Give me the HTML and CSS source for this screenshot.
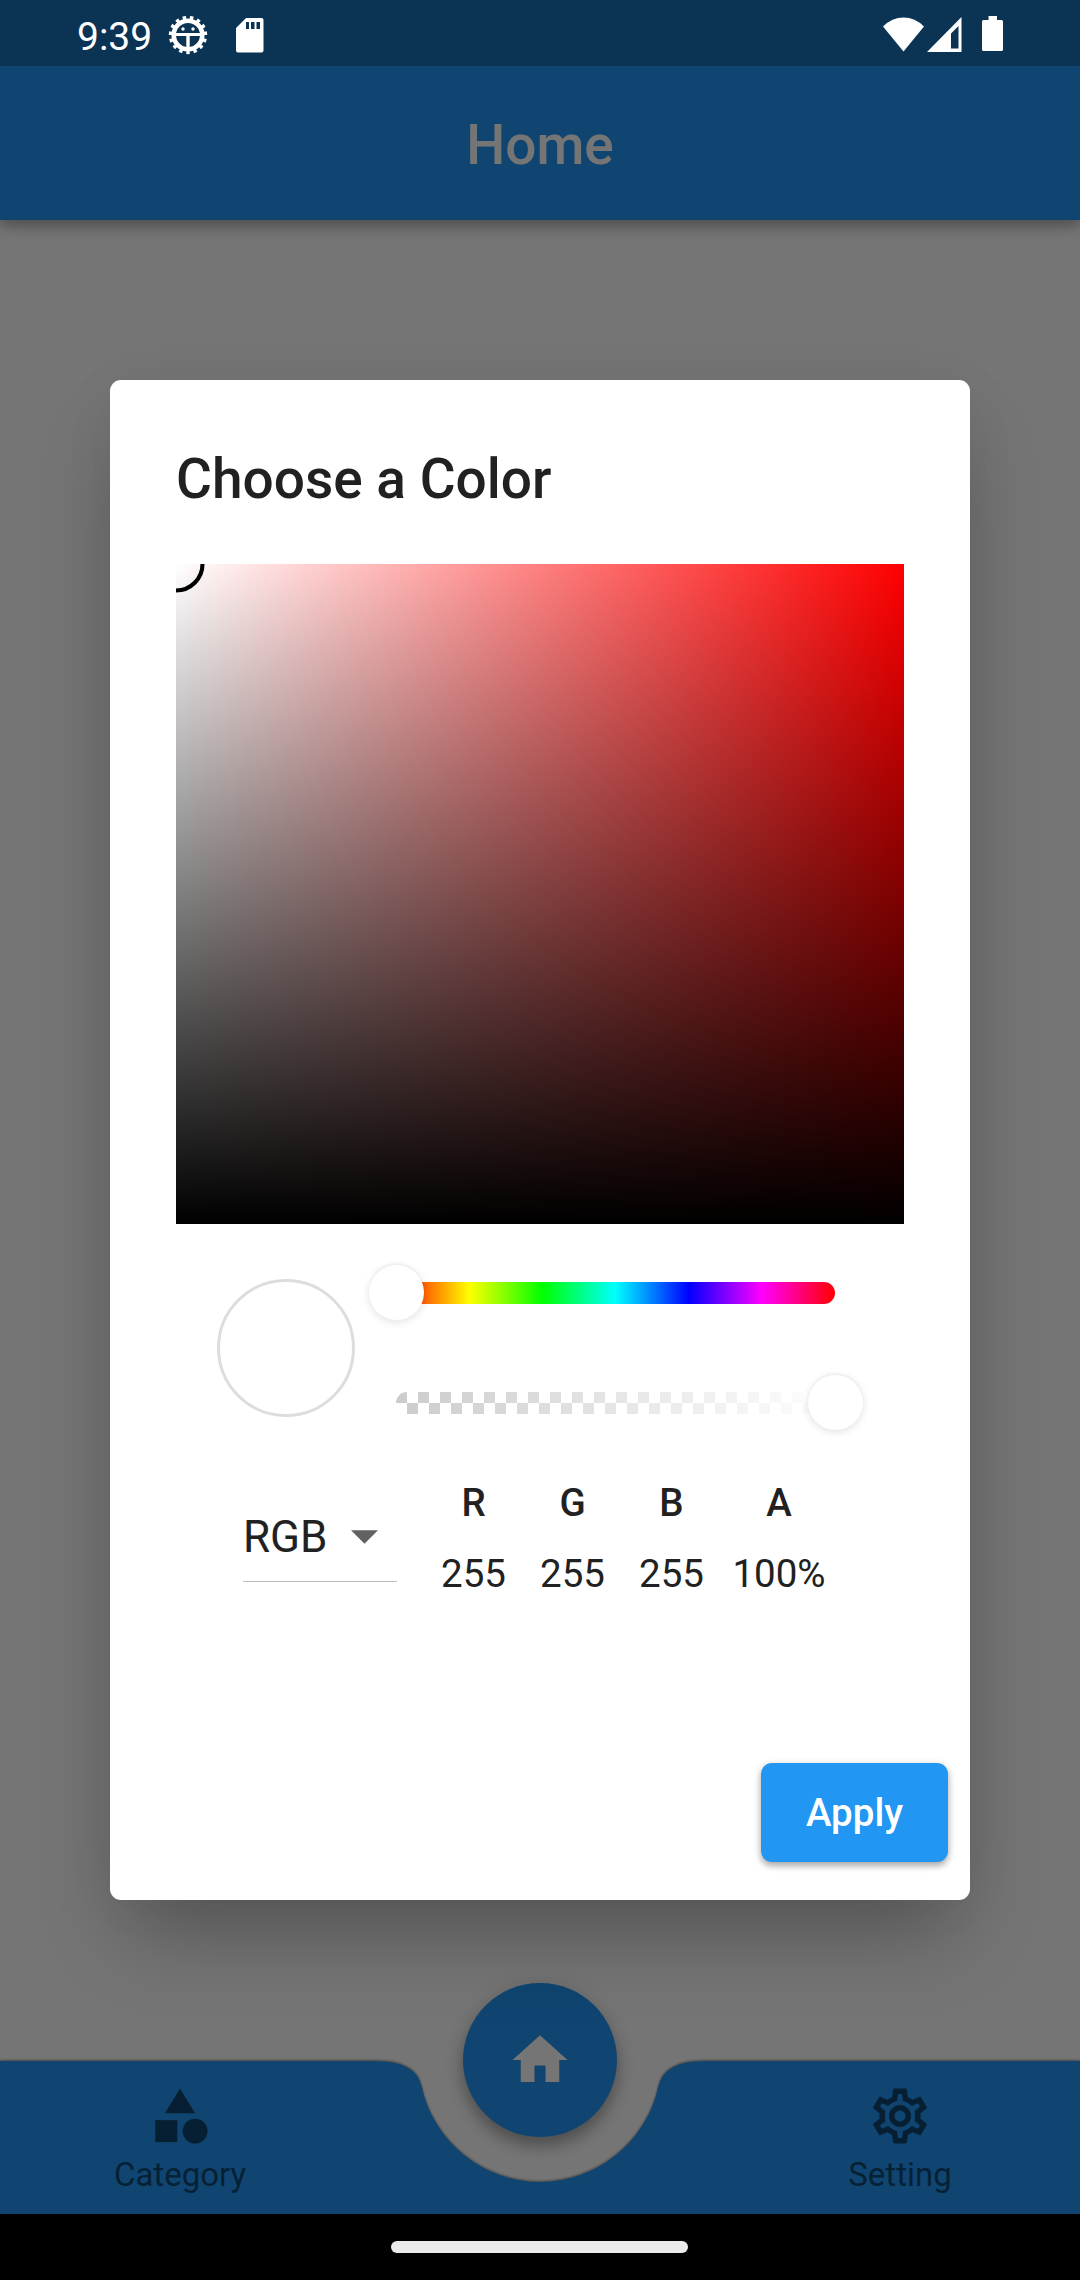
FILE: index.html
```html
<!DOCTYPE html>
<html lang="en">
<head>
<meta charset="utf-8">
<title>Choose a Color</title>
<link rel="stylesheet" href="styles.css">
</head>
<body>
<div class="phone">
  <div class="status-space"></div>
  <header class="app-bar"><h1 class="app-title">Home</h1></header>
  <main class="page"></main>
  <nav class="bottom-nav">
    <svg class="nav-shape" viewBox="0 0 1080 154" width="1080" height="154">
      <path d="M0 1H375Q416.25 1 421.7 26.4A121 121 0 0 0 658.3 26.4Q663.75 1 705 1H1080V154H0Z"/>
    </svg>
    <a class="nav-item">
      <svg class="nav-icon" viewBox="0 0 24 24"><path d="M12 2l-5.5 9h11z"/><circle cx="17.5" cy="17.5" r="4.5"/><path d="M3 13.5h8v8H3z"/></svg>
      <span class="nav-label">Category</span>
    </a>
    <a class="home-button">
      <svg class="home-icon" viewBox="0 0 24 24"><path d="M10 20v-6h4v6h5v-8h3L12 3 2 12h3v8z"/></svg>
    </a>
    <a class="nav-item">
      <svg class="nav-icon" viewBox="0 0 24 24"><path d="M19.43 12.98c.04-.32.07-.64.07-.98 0-.34-.03-.66-.07-.98l2.11-1.65c.19-.15.24-.42.12-.64l-2-3.46c-.09-.16-.26-.25-.44-.25-.06 0-.12.01-.17.03l-2.49 1c-.52-.4-1.08-.73-1.69-.98l-.38-2.65C14.46 2.18 14.25 2 14 2h-4c-.25 0-.46.18-.49.42l-.38 2.65c-.61.25-1.17.59-1.69.98l-2.49-1c-.06-.02-.12-.03-.18-.03-.17 0-.34.09-.43.25l-2 3.46c-.13.22-.07.49.12.64l2.11 1.65c-.04.32-.07.65-.07.98 0 .33.03.66.07.98l-2.11 1.65c-.19.15-.24.42-.12.64l2 3.46c.09.16.26.25.44.25.06 0 .12-.01.17-.03l2.49-1c.52.4 1.08.73 1.69.98l.38 2.65c.03.24.24.42.49.42h4c.25 0 .46-.18.49-.42l.38-2.65c.61-.25 1.17-.59 1.69-.98l2.49 1c.06.02.12.03.18.03.17 0 .34-.09.43-.25l2-3.46c.12-.22.07-.49-.12-.64l-2.11-1.65zm-1.98-1.71c.04.31.05.52.05.73 0 .21-.02.43-.05.73l-.14 1.13.89.7 1.08.84-.7 1.21-1.27-.51-1.04-.42-.9.68c-.43.32-.84.56-1.25.73l-1.06.43-.16 1.13-.2 1.35h-1.4l-.19-1.35-.16-1.13-1.06-.43c-.43-.18-.83-.41-1.23-.71l-.91-.7-1.06.43-1.27.51-.7-1.21 1.08-.84.89-.7-.14-1.13c-.03-.31-.05-.54-.05-.74s.02-.43.05-.73l.14-1.13-.89-.7-1.08-.84.7-1.21 1.27.51 1.04.42.9-.68c.43-.32.84-.56 1.25-.73l1.06-.43.16-1.13.2-1.35h1.39l.19 1.35.16 1.13 1.06.43c.43.18.83.41 1.23.71l.91.7 1.06-.43 1.27-.51.7 1.21-1.07.85-.89.7.14 1.13zM12 8c-2.21 0-4 1.79-4 4s1.79 4 4 4 4-1.79 4-4-1.79-4-4-4zm0 6c-1.1 0-2-.9-2-2s.9-2 2-2 2 .9 2 2-.9 2-2 2z"/></svg>
      <span class="nav-label">Setting</span>
    </a>
  </nav>
  <div class="gesture-space"></div>

  <div class="scrim">
    <section class="dialog">
      <h2 class="dialog-title">Choose a Color</h2>
      <div class="color-area">
        <svg class="pointer" width="60" height="60"><circle cx="0" cy="0" r="26.5"/></svg>
      </div>
      <div class="slider-row">
        <div class="swatch"></div>
        <div class="sliders">
          <div class="slider hue"><span class="thumb"></span></div>
          <div class="slider alpha"><span class="thumb"></span></div>
        </div>
      </div>
      <div class="values-row">
        <div class="mode-select">
          <span>RGB</span>
          <svg class="arrow" viewBox="0 0 10 5"><path d="M0 0h10L5 5z"/></svg>
        </div>
        <div class="channels">
          <div class="channel"><b>R</b><span>255</span></div>
          <div class="channel"><b>G</b><span>255</span></div>
          <div class="channel"><b>B</b><span>255</span></div>
          <div class="channel wide"><b>A</b><span>100%</span></div>
        </div>
      </div>
      <div class="actions"><button class="apply">Apply</button></div>
    </section>
  </div>

  <div class="status-bar">
    <span class="clock">9:39</span>
    <svg class="bug" viewBox="-20 -20 40 40" width="40" height="40">
      <circle r="14.3" class="ring"/>
      <circle r="17.2" class="teeth" pathLength="60" transform="rotate(90)"/>
      <path d="M-14-2H14V1H-14zM-1.700 0H1.700V14H-1.700z"/>
      <circle cx="-5" cy="-6" r="1.700"/><circle cx="5" cy="-6" r="1.700"/>
    </svg>
    <svg class="sd" viewBox="0 0 28 35" width="28" height="35"><path fill-rule="evenodd" d="M10 0H25.500Q27.500 0 27.500 2V32.500Q27.500 34.500 25.500 34.500H2Q0 34.500 0 32.500V10zM10 4V11H13V4zM15 4V11H18.500V4zM20.500 4V11H24V4z"/></svg>
    <div class="system-icons">
      <svg class="wifi" viewBox="0 0 41 35" width="41" height="35"><path d="M0 9.500Q9 0.500 20.500 0.500T41 9.500L20.500 34.500z"/></svg>
      <svg class="signal" viewBox="0 0 35 35" width="35" height="35"><path fill-rule="evenodd" d="M34.500 0V35H0zM31.500 9L24 16.500V31.500H31.500z"/></svg>
      <svg class="battery" viewBox="0 0 21 35" width="21" height="35"><path d="M6.500 0H15V4H19.500Q21 4 21 5.500V33.500Q21 35 19.500 35H1.500Q0 35 0 33.500V5.500Q0 4 1.500 4H6.500z"/></svg>
    </div>
  </div>
  <div class="gesture-bar"><span class="handle"></span></div>
</div>
</body>
</html>
```
FILE: styles.css
```css
* { box-sizing: border-box; }
body { margin: 0; font-family: Roboto, sans-serif; }
.phone {
  position: relative;
  width: 1080px;
  height: 2280px;
  display: flex;
  flex-direction: column;
  overflow: hidden;
  background: #fff;
}
.status-space { height: 66px; background: #2196f3; z-index: 1; }
.app-bar {
  height: 154px;
  display: flex;
  align-items: center;
  justify-content: center;
  padding-top: 3px;
  background: #2196f3;
  box-shadow: 0 6px 12px rgba(0,0,0,.26), 0 3px 22px rgba(0,0,0,.12);
}
.app-title { margin: 0; font-size: 55px; font-weight: 500; color: #fff; }
.page { flex: 1; }
.bottom-nav { position: relative; height: 154px; display: flex; justify-content: space-between; }
.nav-shape { position: absolute; inset: 0; overflow: visible; filter: drop-shadow(0 -1px 1px rgba(0,0,0,.4)); fill: #2196f3; }
.nav-item {
  position: relative;
  width: 360px;
  display: flex;
  flex-direction: column;
  align-items: center;
  padding-top: 23px;
  color: rgba(0,0,0,.54);
}
.nav-icon { width: 66px; height: 66px; fill: currentColor; }
.nav-label { margin-top: 7px; font-size: 33px; line-height: 38px; }
.home-button {
  position: relative;
  width: 154px;
  height: 154px;
  margin-top: -77px;
  display: flex;
  align-items: center;
  justify-content: center;
  border-radius: 50%;
  background: #2196f3;
  box-shadow: 0 9px 14px rgba(0,0,0,.25), 0 5px 26px rgba(0,0,0,.14);
}
.home-icon { width: 66px; height: 66px; fill: #fff; }
.gesture-space { height: 66px; background: #fff; }

.scrim {
  position: absolute;
  inset: 0;
  z-index: 2;
  display: flex;
  align-items: center;
  justify-content: center;
  background: rgba(0,0,0,.54);
}
.dialog {
  width: 860px;
  height: 1520px;
  display: flex;
  flex-direction: column;
  padding: 67px 22px 38px 66px;
  border-radius: 11px;
  background: #fff;
  color: #212121;
  box-shadow: 0 46px 80px -16px rgba(0,0,0,.29), 0 2px 60px rgba(0,0,0,.04);
}
.dialog-title { margin: 0; font-size: 55px; line-height: 64px; font-weight: 500; }
.color-area {
  width: 728px;
  height: 660px;
  margin-top: 53px;
  background: linear-gradient(to bottom, transparent, #000), linear-gradient(to right, #fff, #f00);
}
.pointer { display: block; fill: none; stroke: #000; stroke-width: 4.1; }
.slider-row { display: flex; padding-left: 41px; margin-top: 55px; }
.swatch { width: 138px; height: 138px; border: 3px solid #ddd; border-radius: 50%; }
.sliders { display: flex; flex-direction: column; gap: 88px; padding: 2.500px 0 0 41px; }
.slider { display: flex; align-items: center; width: 439px; height: 22px; border-radius: 11px; }
.hue { background: linear-gradient(to right, #f00, #ff0, #0f0, #0ff, #00f, #f0f, #f00); }
.alpha {
  justify-content: flex-end;
  background:
    linear-gradient(to right, rgba(255,255,255,0), #fff),
    conic-gradient(#fff 25%, #ccc 0 50%, #fff 0 75%, #ccc 0) 0 0 / 22px 22px;
}
.thumb {
  flex: none;
  width: 55px;
  height: 55px;
  margin: 0 -27.5px;
  border-radius: 50%;
  background: #fff;
  box-shadow: 0 2px 8px rgba(0,0,0,.12), 0 -2px 2px rgba(0,0,0,.04);
}
.values-row { display: flex; margin-top: 58px; padding-left: 67px; }
.mode-select {
  width: 154px;
  height: 106.500px;
  display: flex;
  align-items: center;
  gap: 23px;
  border-bottom: 1px solid #bdbdbd;
  font-size: 44px;
  padding-top: 19px;
}
.arrow { width: 27px; height: 14px; fill: #616161; }
.channels { display: flex; padding: 4.500px 0 0 27px; font-size: 38.5px; line-height: 45px; }
.channel { width: 99px; display: flex; flex-direction: column; align-items: center; gap: 26px; }
.channel.wide { width: 116px; }
.channel b { font-weight: 500; }
.actions { display: flex; justify-content: flex-end; margin-top: auto; }
.apply {
  width: 187px;
  height: 99px;
  border: 0;
  border-radius: 11px;
  background: #2196f3;
  color: #fff;
  font: 500 38.5px Roboto, sans-serif;
  box-shadow: 0 4px 6px rgba(0,0,0,.25), 0 2px 10px rgba(0,0,0,.14);
}

.status-bar {
  position: absolute;
  inset: 0 0 auto;
  z-index: 3;
  height: 66px;
  display: flex;
  align-items: flex-start;
  padding: 0 77px;
  background: rgba(0,0,0,.25);
  color: #fff;
  fill: #fff;
}
.clock { width: 91px; font-size: 39px; line-height: 74px; }
.bug { margin-top: 15px; }
.bug .ring { fill: none; stroke: #fff; stroke-width: 4.6; }
.bug .teeth { fill: none; stroke: #fff; stroke-width: 4; stroke-dasharray: 1.900 2.100; stroke-dashoffset: .95; }
.sd { margin: 18px 0 0 28px; }
.system-icons { display: flex; margin-left: auto; }
.wifi { margin-top: 17px; }
.signal { margin: 17px 20px 0 3px; }
.battery { margin-top: 16px; }
.gesture-bar {
  position: absolute;
  inset: auto 0 0;
  z-index: 3;
  height: 66px;
  display: flex;
  justify-content: center;
  align-items: center;
  background: #000;
}
.handle { width: 297px; height: 12px; margin-right: 1px; border-radius: 6px; background: #ebebeb; }
```
